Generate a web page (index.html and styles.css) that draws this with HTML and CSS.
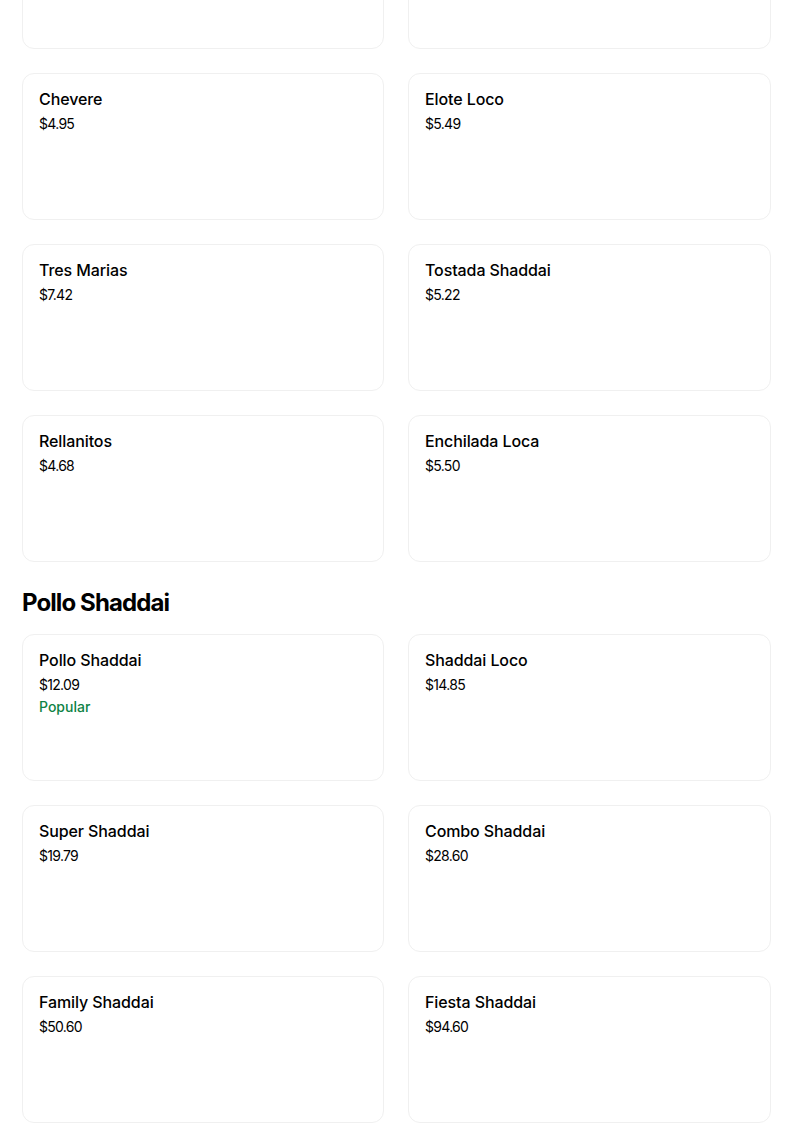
FILE: index.html
```html
<!DOCTYPE html>
<html lang="en">
<head>
<meta charset="utf-8">
<title>Menu</title>
<link rel="stylesheet" href="styles.css">
</head>
<body>
<main class="menu">
  <section class="section section-first">
    <div class="grid">
      <div class="card"></div>
      <div class="card"></div>
      <div class="card"><div class="title">Chevere</div><div class="price">$4.95</div></div>
      <div class="card"><div class="title">Elote Loco</div><div class="price">$5.49</div></div>
      <div class="card"><div class="title">Tres Marias</div><div class="price">$7.42</div></div>
      <div class="card"><div class="title">Tostada Shaddai</div><div class="price">$5.22</div></div>
      <div class="card"><div class="title">Rellanitos</div><div class="price">$4.68</div></div>
      <div class="card"><div class="title">Enchilada Loca</div><div class="price">$5.50</div></div>
    </div>
  </section>
  <section class="section">
    <h2 class="heading">Pollo Shaddai</h2>
    <div class="grid">
      <div class="card"><div class="title">Pollo Shaddai</div><div class="price">$12.09</div><div class="badge">Popular</div></div>
      <div class="card"><div class="title">Shaddai Loco</div><div class="price">$14.85</div></div>
      <div class="card"><div class="title">Super Shaddai</div><div class="price">$19.79</div></div>
      <div class="card"><div class="title">Combo Shaddai</div><div class="price">$28.60</div></div>
      <div class="card"><div class="title">Family Shaddai</div><div class="price">$50.60</div></div>
      <div class="card"><div class="title">Fiesta Shaddai</div><div class="price">$94.60</div></div>
    </div>
  </section>
</main>
</body>
</html>
```

FILE: styles.css
```css
html, body {
  margin: 0;
  padding: 0;
  background: #ffffff;
}

body {
  font-family: Inter, "Noto Sans", "Liberation Sans", sans-serif;
  color: #000000;
  overflow: hidden;
}

.menu {
  width: 749px;
  padding-left: 22px;
}

.section-first {
  margin-top: -98px;
}

.grid {
  display: grid;
  grid-template-columns: 362px 363px;
  column-gap: 24px;
  row-gap: 24px;
}

.card {
  box-sizing: border-box;
  height: 147px;
  border: 1px solid #f0f0f0;
  border-radius: 12px;
  padding: 15px 16px;
  background: #ffffff;
}

.heading {
  margin: 25px 0 15px;
  font-size: 24px;
  line-height: 32px;
  font-weight: 700;
  letter-spacing: -0.9px;
  color: #000000;
}

.title {
  font-size: 16px;
  line-height: 20px;
  font-weight: 500;
  color: #000000;
  letter-spacing: -0.1px;
}

.price {
  margin-top: 5px;
  font-size: 14px;
  line-height: 20px;
  font-weight: 400;
  color: #000000;
  letter-spacing: -0.7px;
}

.badge {
  margin-top: 2px;
  font-size: 14px;
  line-height: 20px;
  font-weight: 500;
  color: #0e8345;
}
```
